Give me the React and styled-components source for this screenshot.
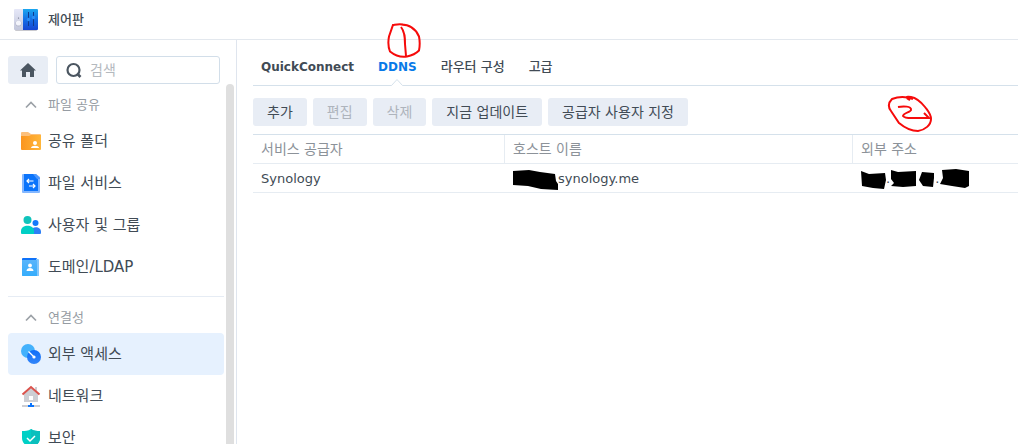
import React, { useState } from 'react';
import styled, { createGlobalStyle } from 'styled-components';

const GlobalStyle = createGlobalStyle`
  * {
    box-sizing: border-box;
  }

  body {
    margin: 0;
    background: #ffffff;
    color: #414b55;
    font-family: 'DejaVu Sans', 'Noto Sans CJK KR', sans-serif;
    font-size: 14px;
  }

  button,
  input {
    font-family: inherit;
  }
`;

const Window = styled.div`
  display: flex;
  flex-direction: column;
  height: 100vh;
  overflow: hidden;
`;

const TitleBar = styled.header`
  display: flex;
  align-items: center;
  gap: 10px;
  flex: none;
  height: 40px;
  padding: 0 14px;
  border-bottom: 1px solid #e3e8ee;
`;

const Title = styled.h1`
  margin: 0;
  font-size: 13px;
  font-weight: 500;
  line-height: 20px;
`;

const Body = styled.div`
  display: flex;
  flex: 1;
  min-height: 0;
`;

const Sidebar = styled.aside`
  display: flex;
  flex-direction: column;
  flex: none;
  width: 237px;
  border-right: 1px solid #dfe5ee;
`;

const SearchRow = styled.div`
  display: flex;
  gap: 8px;
  flex: none;
  padding: 16px 16px 0 8px;
`;

const HomeButton = styled.button`
  display: flex;
  align-items: center;
  justify-content: center;
  width: 40px;
  height: 28px;
  padding: 0;
  border: 0;
  border-radius: 3px;
  background: #e8edf5;
`;

const SearchBox = styled.label`
  display: flex;
  align-items: center;
  gap: 8px;
  flex: 1;
  min-width: 0;
  height: 28px;
  padding: 0 8px;
  border: 1px solid #d2dee9;
  border-radius: 3px;
`;

const SearchInput = styled.input`
  flex: 1;
  min-width: 0;
  padding: 0;
  border: 0;
  outline: 0;
  background: none;
  color: #414b55;
  font-size: 14px;
  line-height: 20px;

  &::placeholder {
    color: #b4b9be;
    opacity: 1;
  }
`;

const MenuArea = styled.div`
  display: flex;
  flex: 1;
  min-height: 0;
  padding: 0 2px 0 8px;
  overflow: hidden;
`;

const Menu = styled.nav`
  flex: 1;
  min-width: 0;
`;

const ScrollThumb = styled.div`
  width: 8px;
  margin-left: 2px;
  border-radius: 4px 4px 0 0;
  background: #dfdfdf;
`;

const Section = styled.section`
  padding: 4px 0 8px;

  & + & {
    border-top: 1px solid #e6ecf4;
  }
`;

const SectionButton = styled.button`
  display: flex;
  align-items: center;
  gap: 10px;
  width: 100%;
  height: 32px;
  padding: 2px 16px 0;
  border: 0;
  background: none;
  color: #969ca3;
  font-size: 13px;
  line-height: 20px;
`;

const MenuLink = styled.a`
  display: flex;
  align-items: center;
  gap: 6px;
  height: 42px;
  padding: 0 12px;
  border-radius: 4px;
  background: ${props => (props.$active ? '#e6f1fe' : 'transparent')};
  color: #414b55;
  font-size: 15px;
  line-height: 20px;
  text-decoration: none;

  svg {
    flex: none;
  }
`;

const Content = styled.main`
  position: relative;
  flex: 1;
  min-width: 0;
  padding-left: 16px;
`;

const Tabs = styled.div`
  display: flex;
  gap: 24px;
  padding: 0 8px;
  border-bottom: 1px solid #d5e1eb;
`;

const Tab = styled.button`
  position: relative;
  height: 45px;
  padding: 8px 0 0;
  border: 0;
  background: none;
  color: ${props => (props.$active ? '#0879e8' : '#414b55')};
  font-size: ${props => (props.$latin ? '12px' : '13px')};
  font-weight: ${props => (props.$latin ? 700 : 500)};
  line-height: 20px;
`;

const TabNotch = styled.svg`
  position: absolute;
  bottom: -1px;
  left: 50%;
  margin-left: -7px;
`;

const TabMark = styled.svg`
  position: absolute;
  bottom: 27px;
  left: 50%;
  margin-left: -11px;
  pointer-events: none;
`;

const ColumnMark = styled.svg`
  position: absolute;
  bottom: 29px;
  left: 34px;
  pointer-events: none;
`;

const Toolbar = styled.div`
  display: flex;
  gap: 6px;
  padding: 12px 0 8px;
`;

const ToolButton = styled.button`
  height: 28px;
  padding: 0 14px;
  border: 0;
  border-radius: 3px;
  background: #e8edf5;
  color: #414b55;
  font-size: 14px;
  line-height: 20px;
  white-space: nowrap;

  &:disabled {
    color: #aeb4bc;
  }
`;

const Table = styled.table`
  width: 100%;
  border-top: 1px solid #d5e1eb;
  border-collapse: separate;
  border-spacing: 0;
  table-layout: fixed;
`;

const HeadCell = styled.th`
  position: relative;
  width: ${props => props.$width || 'auto'};
  height: 29px;
  padding: 0 8px;
  border-right: 1px solid #e6ecf2;
  border-bottom: 1px solid #e6ecf2;
  color: #8c9299;
  font-size: 14px;
  font-weight: 400;
  line-height: 20px;
  text-align: left;

  &:last-child {
    border-right: 0;
  }
`;

const Cell = styled.td`
  height: 29px;
  padding: 0 8px;
  border-bottom: 1px solid #e6ecf2;
  font-size: 13px;
  line-height: 20px;
`;

const CellLine = styled.div`
  display: flex;
  align-items: center;
  height: 28px;
  padding-top: 2px;
`;

const AppIcon = () => (
  <svg width="24" height="24" viewBox="0 0 24 24" aria-hidden="true">
    <defs>
      <linearGradient id="panelBlue" x1="0" y1="0" x2="0" y2="1">
        <stop offset="0" stopColor="#1aa7ef" />
        <stop offset="0.5" stopColor="#146fe6" />
        <stop offset="1" stopColor="#1646d2" />
      </linearGradient>
      <linearGradient id="panelGrey" x1="0" y1="0" x2="0" y2="1">
        <stop offset="0" stopColor="#e6e8f8" />
        <stop offset="1" stopColor="#c3c7db" />
      </linearGradient>
    </defs>
    <path d="M1 20h22v2a1 1 0 0 1-1 1H2a1 1 0 0 1-1-1z" fill="#c9c9ce" />
    <path d="M1 1h8v21H1a1 1 0 0 1-1-1V2a1 1 0 0 1 1-1z" fill="url(#panelGrey)" />
    <path d="M9 1h14a1 1 0 0 1 1 1v19a1 1 0 0 1-1 1H9z" fill="url(#panelBlue)" />
    <circle cx="4.500" cy="15.500" r="3" fill="#b2b5c8" />
    <circle cx="4.500" cy="15" r="2.600" fill="#f3f4fb" />
    <circle cx="4.500" cy="10" r="0.600" fill="#5d637a" />
    <path d="M14.500 4v14M19.500 4v14" stroke="#103a8c" />
    <circle cx="14.500" cy="11.500" r="1.700" fill="#2b8df4" />
    <circle cx="19.500" cy="9.500" r="1.700" fill="#2b8df4" />
  </svg>
);

const HomeIcon = () => (
  <svg width="16" height="16" viewBox="0 0 16 16" aria-hidden="true">
    <path d="M8 1L0 8.500h2V15h4v-5h4v5h4V8.500h2z" fill="#4b5661" />
  </svg>
);

const SearchIcon = () => (
  <svg width="17" height="17" viewBox="0 0 17 17" fill="none" stroke="#4b5661" strokeWidth="2.200" aria-hidden="true">
    <circle cx="8.500" cy="8" r="6" />
    <path d="M12 11.500l3.500 3.500" strokeWidth="2.600" />
  </svg>
);

const ChevronIcon = () => (
  <svg width="14" height="10" viewBox="0 0 14 10" aria-hidden="true">
    <path d="M2 7.500L7 2.500l5 5" fill="none" stroke="#9ca1a7" strokeWidth="1.700" />
  </svg>
);

const FolderIcon = () => (
  <svg width="22" height="22" viewBox="0 0 22 22" aria-hidden="true">
    <defs>
      <linearGradient id="folder">
        <stop offset="0" stopColor="#fb951f" />
        <stop offset="1" stopColor="#ffb63a" />
      </linearGradient>
    </defs>
    <path d="M1 3a1 1 0 0 1 1-1h6l3 2h9a1 1 0 0 1 1 1v3H1z" fill="#fcc07c" />
    <path d="M1 6h8l2-1h10v14a1 1 0 0 1-1 1H2a1 1 0 0 1-1-1z" fill="url(#folder)" />
    <circle cx="15" cy="13" r="2" fill="#fff" />
    <path d="M11 18c0-3 8-3 8 0z" fill="#fff" />
  </svg>
);

const FileServiceIcon = () => (
  <svg width="22" height="22" viewBox="0 0 22 22" aria-hidden="true">
    <path d="M3 2h13l4 3v15a1 1 0 0 1-1 1H3a1 1 0 0 1-1-1V3a1 1 0 0 1 1-1z" fill="#83b7ff" />
    <path d="M4 2h10l4 4v13H4z" fill="#0b74fb" />
    <path d="M13 2h3l4 4v1h-3z" fill="#4e98fc" />
    <path d="M13.500 9H7M9 7L7 9l2 2M9 14h6M13 12l2 2-2 2" fill="none" stroke="#fff" strokeWidth="1.200" />
  </svg>
);

const UsersIcon = () => (
  <svg width="22" height="22" viewBox="0 0 22 22" aria-hidden="true">
    <circle cx="7.500" cy="6" r="4" fill="#10c3bb" />
    <circle cx="15.500" cy="9" r="3" fill="#1579fb" />
    <path d="M10 20v-3c2-5 11-5 11 1v1a1 1 0 0 1-1 1z" fill="#2d7ff6" />
    <path d="M1 17c0-7 13-7 13 0v3H2a1 1 0 0 1-1-1z" fill="#00cfc5" />
  </svg>
);

const DomainIcon = () => (
  <svg width="22" height="22" viewBox="0 0 22 22" aria-hidden="true">
    <defs>
      <linearGradient id="domain" x1="0" y1="0" x2="0" y2="1">
        <stop offset="0" stopColor="#59b5fb" />
        <stop offset="1" stopColor="#35adfc" />
      </linearGradient>
    </defs>
    <path d="M3 2h13a1 1 0 0 1 1 1v2H2V3a1 1 0 0 1 1-1z" fill="#0f72f9" />
    <path d="M16 3h2a1 1 0 0 1 1 1v16H2V5h14z" fill="#83c7fc" />
    <path d="M2 4h15v16H3a1 1 0 0 1-1-1z" fill="url(#domain)" />
    <circle cx="10" cy="9.500" r="1.900" fill="#fff" />
    <path d="M6.500 15c0-4 7-4 7 0z" fill="#fff" />
  </svg>
);

const ExternalIcon = () => (
  <svg width="22" height="22" viewBox="0 0 22 22" aria-hidden="true">
    <defs>
      <linearGradient id="dial" x1="0" y1="0" x2="0" y2="1">
        <stop offset="0" stopColor="#0f6df8" />
        <stop offset="1" stopColor="#3285f9" />
      </linearGradient>
    </defs>
    <circle cx="8" cy="8" r="7" fill="#43b1fc" />
    <circle cx="14" cy="14" r="7" fill="url(#dial)" />
    <path d="M8.500 8.500l5 5" stroke="#fff" strokeWidth="1.300" />
    <circle cx="14" cy="14" r="1.600" fill="#fff" />
  </svg>
);

const NetworkIcon = () => (
  <svg width="22" height="22" viewBox="0 0 22 22" aria-hidden="true">
    <path d="M4 8l7-5 7 5v9H4z" fill="#cdced3" />
    <path d="M15 2h2v5h-2z" fill="#cdced3" />
    <path d="M2.500 9.500L11 2l8.500 7.500" fill="none" stroke="#db524c" strokeWidth="2" />
    <path d="M9 11h4v4H9z" fill="#fff" />
    <path d="M2 20h18v2H2z" fill="#cdced3" />
    <path d="M10 18h2v2h2v2H8v-2h2z" fill="#0b74fb" />
  </svg>
);

const ShieldIcon = () => (
  <svg width="22" height="22" viewBox="0 0 22 22" aria-hidden="true">
    <path d="M11 2c3 2 6 2 9 2v7c0 5-4 8-9 10-5-2-9-5-9-10V4c3 0 6 0 9-2z" fill="#00d0c6" />
    <path d="M11 2c3 2 6 2 9 2v7c0 5-4 8-9 10z" fill="#0bbfbd" />
    <path d="M7 11l3 3 5-5" fill="none" stroke="#fff" strokeWidth="1.500" />
  </svg>
);

const Scribble = ({ width, d }) => (
  <svg width={width} height="22" viewBox={`0 0 ${width} 22`} aria-hidden="true">
    <path d={d} fill="#000" />
  </svg>
);

const sections = [
  {
    title: '파일 공유',
    items: [
      { label: '공유 폴더', Icon: FolderIcon },
      { label: '파일 서비스', Icon: FileServiceIcon },
      { label: '사용자 및 그룹', Icon: UsersIcon },
      { label: '도메인/LDAP', Icon: DomainIcon },
    ],
  },
  {
    title: '연결성',
    items: [
      { label: '외부 액세스', Icon: ExternalIcon },
      { label: '네트워크', Icon: NetworkIcon },
      { label: '보안', Icon: ShieldIcon },
    ],
  },
];

const tabs = [
  { label: 'QuickConnect', latin: true },
  { label: 'DDNS', latin: true, marked: true },
  { label: '라우터 구성' },
  { label: '고급' },
];

const actions = [
  { label: '추가' },
  { label: '편집', disabled: true },
  { label: '삭제', disabled: true },
  { label: '지금 업데이트' },
  { label: '공급자 사용자 지정' },
];

const App = () => {
  const [page, setPage] = useState('외부 액세스');
  const [tab, setTab] = useState('DDNS');
  const [query, setQuery] = useState('');

  return (
    <Window>
      <GlobalStyle />
      <TitleBar>
        <AppIcon />
        <Title>제어판</Title>
      </TitleBar>
      <Body>
        <Sidebar>
          <SearchRow>
            <HomeButton type="button" aria-label="홈">
              <HomeIcon />
            </HomeButton>
            <SearchBox>
              <SearchIcon />
              <SearchInput
                aria-label="검색"
                placeholder="검색"
                value={query}
                onChange={e => setQuery(e.target.value)}
              />
            </SearchBox>
          </SearchRow>
          <MenuArea>
            <Menu>
              {sections.map(({ title, items }) => (
                <Section key={title}>
                  <SectionButton type="button">
                    <ChevronIcon />
                    {title}
                  </SectionButton>
                  {items.map(({ label, Icon }) => (
                    <MenuLink key={label} href="#" $active={page === label} onClick={() => setPage(label)}>
                      <Icon />
                      {label}
                    </MenuLink>
                  ))}
                </Section>
              ))}
            </Menu>
            <ScrollThumb />
          </MenuArea>
        </Sidebar>
        <Content>
          <Tabs role="tablist">
            {tabs.map(({ label, latin, marked }) => (
              <Tab
                key={label}
                type="button"
                role="tab"
                aria-selected={tab === label}
                $active={tab === label}
                $latin={latin}
                onClick={() => setTab(label)}
              >
                {label}
                {tab === label && (
                  <TabNotch width="14" height="8" viewBox="0 0 14 8" aria-hidden="true">
                    <path d="M1 7.500L7 1.500l6 6V8H1z" fill="#fff" />
                    <path d="M0 7.500h1.500L7 1.500l5.500 6H14" fill="none" stroke="#d5e1eb" />
                  </TabNotch>
                )}
                {marked && (
                  <TabMark width="36" height="36" viewBox="0 0 36 36" fill="none" stroke="#f60b0b" strokeWidth="2" aria-hidden="true">
                    <path d="M17 2.500c-4-1-7 0-10 .5L3 14.500c-1 5-1 10 1 15 5 4 11 6 17 5 5-1 9-3 12-6 1-5 1-9 0-14-3-7-9-12-18-12" />
                    <path d="M15 5c4 5 4 11 4 17l1 12" />
                  </TabMark>
                )}
              </Tab>
            ))}
          </Tabs>
          <Toolbar>
            {actions.map(({ label, disabled }) => (
              <ToolButton key={label} type="button" disabled={disabled}>
                {label}
              </ToolButton>
            ))}
          </Toolbar>
          <Table>
            <thead>
              <tr>
                <HeadCell $width="252px">서비스 공급자</HeadCell>
                <HeadCell $width="348px">호스트 이름</HeadCell>
                <HeadCell>
                  외부 주소
                  <ColumnMark width="46" height="40" viewBox="0 0 46 40" fill="none" stroke="#f60b0b" strokeWidth="2" aria-hidden="true">
                    <path d="M26 5c-8-3-16-2-21 0-4 4-4 8-1 12l8 12c6 5 12 8 19 8 7-1 13-6 13-12 0-5-3-8-6-12-4-5-8-9-14-10-6-1-5 1-1 3" />
                    <path d="M11 13c5-1 14-1 13 3 0 2-8 3-8 6 2 3 9 2 14 2h12l-5-5" />
                  </ColumnMark>
                </HeadCell>
              </tr>
            </thead>
            <tbody>
              <tr>
                <Cell>
                  <CellLine>Synology</CellLine>
                </Cell>
                <Cell>
                  <CellLine>
                    <Scribble
                      width={45}
                      d="M0 3l16-1 11 2 15 2 1 7 2 3v6l-17-1-13-3-15-1z"
                    />
                    synology.me
                  </CellLine>
                </Cell>
                <Cell>
                  <CellLine>
                    <Scribble width={25} d="M0 3l8 3 16-1 1 7-2 9-11-1-11-2z" />
                    .
                    <Scribble width={27} d="M1 2l7 2 18-1v15l-13 1-12-1 3-3-3-4z" />
                    <Scribble width={18} d="M5 4l12 1v5l-1 9-10-1-4-6z" />
                    .
                    <Scribble width={31} d="M3 2l14-1 13 2v15l-4 2-13-2-12-2 3-6z" />
                  </CellLine>
                </Cell>
              </tr>
            </tbody>
          </Table>
        </Content>
      </Body>
    </Window>
  );
};

export default App;
